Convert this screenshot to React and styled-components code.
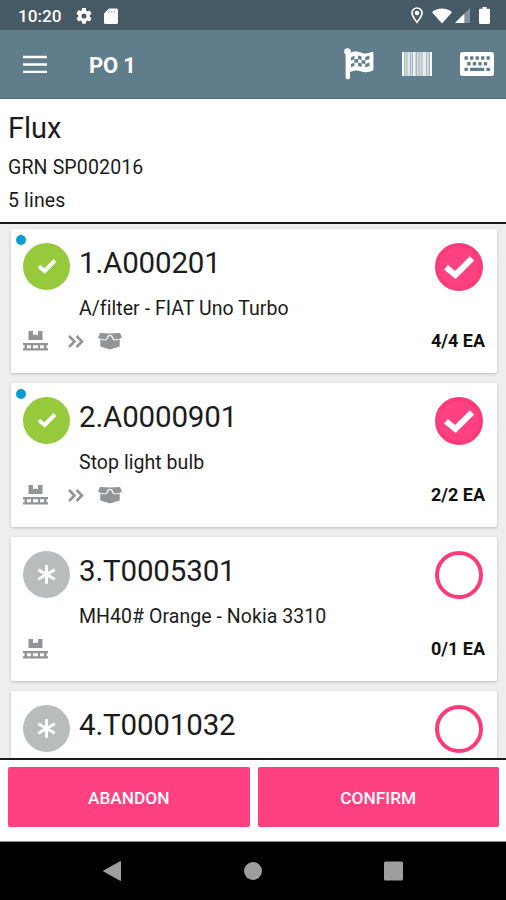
import React from 'react';
import styled, { createGlobalStyle } from 'styled-components';


const GlobalStyle = createGlobalStyle`
    body {
        margin: 0;
        font-family: Roboto, "Liberation Sans", sans-serif;
        color: #1c1c1c;
    }
    * {
        box-sizing: border-box;
    }
    svg {
        display: block;
        flex-shrink: 0;
    }
`

const Screen = styled.div`
    width: 506px;
    height: 900px;
    display: flex;
    flex-direction: column;
    overflow: hidden;
    background: #fff;
`

const StatusBar = styled.div`
    height: 30px;
    flex-shrink: 0;
    display: flex;
    align-items: center;
    padding: 1px 16px 0 18px;
    background: #455a64;
    color: #fff;
`

const Clock = styled.span`
    width: 58px;
    font-size: 17.2px;
    font-weight: 500;
    line-height: 24px;
`

const StatusIcons = styled.div`
    display: flex;
    align-items: center;
    gap: ${props => props.gap};
    margin-left: ${props => props.right ? 'auto' : '0'};
`

const Toolbar = styled.div`
    height: 69px;
    flex-shrink: 0;
    display: flex;
    align-items: center;
    padding: 0 12px 0 23px;
    background: #607d8b;
    color: #fff;
    border-bottom: 1px solid #536d79;
`

const Title = styled.span`
    margin-left: 42px;
    margin-top: 3px;
    font-size: 22px;
    font-weight: 700;
    line-height: 28px;
    letter-spacing: -0.2px;
`

const Actions = styled.div`
    margin-left: auto;
    display: flex;
    align-items: center;
    gap: 28px;
`

const Header = styled.div`
    height: 125px;
    flex-shrink: 0;
    padding: 12px 8px 0;
    border-bottom: 2px solid #1a1a1c;
`

const Supplier = styled.div`
    font-size: 29px;
    line-height: 34px;
    margin-bottom: 11px;
`

const HeaderLine = styled.div`
    font-size: 19.5px;
    line-height: 24px;
    letter-spacing: 0.15px;
    margin-bottom: 9px;
`

const List = styled.div`
    flex: 1;
    min-height: 0;
    overflow: hidden;
    display: flex;
    flex-direction: column;
    gap: 10px;
    padding: 5px 9px 0 11px;
    background: #eee;
`

const Card = styled.div`
    position: relative;
    height: 144px;
    flex-shrink: 0;
    padding: 14px 12px 0;
    background: #fff;
    border-radius: 2px;
    box-shadow: 0 1px 3px rgba(0, 0, 0, 0.22);
`

const UnsyncedDot = styled.div`
    position: absolute;
    left: 5px;
    top: 6px;
    width: 10px;
    height: 10px;
    border-radius: 50%;
    background: #0a9bd0;
`

const CardTop = styled.div`
    display: flex;
    align-items: flex-start;
`

const State = styled.div`
    width: 47px;
    height: 47px;
    display: flex;
    align-items: center;
    justify-content: center;
    border-radius: 50%;
    background: ${props => props.done ? '#97c93c' : '#b9bcbd'};
`

const Texts = styled.div`
    flex: 1;
    margin-left: 9px;
    padding-top: 3px;
    white-space: nowrap;
`

const Code = styled.div`
    font-size: 29.5px;
    line-height: 34px;
    letter-spacing: -0.15px;
`

const Description = styled.div`
    margin-top: 17px;
    font-size: 19.5px;
    line-height: 24px;
    letter-spacing: 0.05px;
`

const Check = styled.div`
    width: 48px;
    height: 48px;
    margin-right: 2px;
    display: flex;
    align-items: center;
    justify-content: center;
    border-radius: 50%;
    border: 4px solid #fd3b78;
    background: ${props => props.checked ? '#ff4081' : '#fff'};
`

const CardBottom = styled.div`
    display: flex;
    align-items: center;
    height: 22px;
    margin-top: 9px;
`

const Quantity = styled.span`
    margin-left: auto;
    color: #111;
    font-size: 18px;
    font-weight: 700;
    line-height: 22px;
`

const Route = styled.div`
    display: flex;
    align-items: center;
`

const ChevronSlot = styled.div`
    margin: 0 14px 0 20px;
`

const Footer = styled.div`
    height: 84px;
    flex-shrink: 0;
    display: flex;
    gap: 8px;
    padding: 7px 7px 15px 8px;
    border-top: 2px solid #1a1a1c;
    border-bottom: 1px solid #8a8a8a;
`

const Button = styled.button`
    flex: 1;
    height: 60px;
    padding: 1px 0 0;
    border: 0;
    border-radius: 2px;
    background: #ff4081;
    color: #fff;
    font-family: inherit;
    font-size: 17.3px;
    font-weight: 500;
`

const NavBar = styled.div`
    height: 58px;
    flex-shrink: 0;
    display: flex;
    align-items: center;
    justify-content: space-between;
    padding: 0 102px;
    background: #000;
`

const Gear = () =>
    <svg width="16" height="16" viewBox="2 2 20 20" fill="#fff">
        <path d="M19.14 12.94c.04-.3.06-.61.06-.94s-.02-.64-.07-.94l2.03-1.58c.18-.14.23-.41.12-.61l-1.92-3.32c-.12-.22-.37-.29-.59-.22l-2.39.96c-.5-.38-1.03-.7-1.62-.94l-.36-2.54A.48.48 0 0 0 13.92 2h-3.84c-.24 0-.43.17-.47.41l-.36 2.54c-.59.24-1.13.57-1.62.94l-2.39-.96c-.22-.08-.47 0-.59.22L2.74 8.87c-.12.21-.08.47.12.61l2.03 1.58c-.05.3-.09.63-.09.94s.02.64.07.94l-2.03 1.58c-.18.14-.23.41-.12.61l1.92 3.32c.12.22.37.29.59.22l2.39-.96c.5.38 1.03.7 1.62.94l.36 2.54c.05.24.24.41.48.41h3.84c.24 0 .44-.17.47-.41l.36-2.54c.59-.24 1.13-.56 1.62-.94l2.39.96c.22.08.47 0 .59-.22l1.92-3.32c.12-.22.07-.47-.12-.61zM12 15.2A3.2 3.2 0 1 1 12 8.800a3.2 3.2 0 0 1 0 6.400z" />
    </svg>

const SdCard = () =>
    <svg width="14" height="16" viewBox="0 0 14 16">
        <path d="M5 0.500h7.500a1.500 1.500 0 0 1 1.500 1.500v12.500a1.500 1.500 0 0 1-1.500 1.500h-11a1.500 1.500 0 0 1-1.500-1.500v-9z" fill="#fff" />
        <path d="M5 2.500v2.500M7.800 2.500v2.500M10.600 2.500v2.500" stroke="#b4bec3" strokeWidth="1.100" />
    </svg>

const Pin = () =>
    <svg width="12" height="17" viewBox="0 0 12 17" fill="none" stroke="#fff">
        <path d="M6 15.300C3.300 11.800 1 9 1 6a5 5 0 0 1 10 0c0 3-2.300 5.800-5 9.300z" strokeWidth="1.700" />
        <circle cx="6" cy="6" r="2.300" fill="#fff" stroke="none" />
    </svg>

const Wifi = () =>
    <svg width="20" height="16" viewBox="0 0 20 16">
        <path d="M0 4.200C2.900 1.800 6.300.5 10 .5s7.100 1.300 10 3.700L10 15.500z" fill="#fff" />
    </svg>

const Signal = () =>
    <svg width="15" height="15" viewBox="0 0 15 15">
        <path d="M0 15L15 0v15z" fill="#83929a" />
        <path d="M0 15L9.300 5.700V15z" fill="#fff" />
    </svg>

const Battery = () =>
    <svg width="11" height="17" viewBox="0 0 11 17">
        <path d="M3.500 0h4v1.700h2.300c.7 0 1.200.5 1.200 1.200v12.900c0 .7-.5 1.200-1.200 1.200H1.200C.5 17 0 16.500 0 15.800V2.900c0-.7.5-1.200 1.200-1.200h2.300z" fill="#fff" />
    </svg>

const Burger = () =>
    <svg width="24" height="18" viewBox="0 0 24 18">
        <path d="M0 2h24M0 9.500h24M0 17h24" stroke="#fff" strokeWidth="2.600" />
    </svg>

const Flag = () =>
    <svg width="30" height="32" viewBox="0 0 30 32">
        <circle cx="3.500" cy="3.600" r="3.300" fill="#fff" />
        <rect x="1.600" y="3" width="4.400" height="28.300" rx="1.800" fill="#fff" />
        <path d="M6 5c5-2.200 8-1.500 12 0 3.500 1.200 6.500.3 9.500-.9 1.100-.4 1.900.2 1.900 1.200v15.500c0 1-.4 1.600-1.300 2-4.500 2-8 1.600-11.600.4-3.500-1.200-6.500-.8-10.500.9z" fill="#fff" />
        <path
            d="M7 9.200l3.400-1.400v3.400l-3.400 1.300zM14.100 7.600l3.500.8v3.700l-3.500-1zM10.400 11.200l3.700-.1v3.500l-3.700.1zM17.600 12.100l3.700.3v3.500l-3.700-.4zM21.300 8.900l4.200-1.300v3.400l-4.200 1.400zM7 16l3.400-1.300v3.300l-3.400 1.300zM14.100 14.600l3.500.9v3.600l-3.500-1zM21.300 15.900l4.200-1.300v3.300l-4.200 1.500z"
            fill="#607d8b"
        />
    </svg>

const bars = [
    [0, 2, 1], [3, 1.500, 0.500], [5.500, 2.500, 0.650], [9, 1, 0.500], [11, 2.500, 0.800], [15, 1.500, 0.600],
    [17.500, 2, 0.500], [20.500, 3.500, 0.750], [25, 1.500, 0.600], [28, 2, 0.900],
];

const Barcode = () =>
    <svg width="30" height="24" viewBox="0 0 30 24">
        <rect width="30" height="24" fill="#fff" opacity="0.450" />
        {bars.map(([x, width, opacity]) =>
            <rect key={x} x={x} width={width} height="24" fill="#fff" opacity={opacity} />
        )}
    </svg>

const keys = [
    [4.500, 4.300], [10, 4.300], [15.500, 4.300], [21, 4.300], [26.500, 4.300],
    [7.200, 10], [12.800, 10], [18.300, 10], [23.800, 10],
    [4.500, 15.700], [26.500, 15.700],
];

const Keyboard = () =>
    <svg width="34" height="24" viewBox="0 0 34 24">
        <rect width="34" height="24" rx="2.500" fill="#fff" />
        {keys.map(([x, y]) =>
            <rect key={`${x}-${y}`} x={x} y={y} width="3.400" height="3.400" rx="0.500" fill="#607d8b" />
        )}
        <rect x="10" y="15.700" width="14.200" height="3.400" rx="0.500" fill="#607d8b" />
    </svg>

const Tick = ({ width, height, strokeWidth }) =>
    <svg width={width} height={height} viewBox={`0 0 ${width} ${height}`} fill="none" stroke="#fff" strokeWidth={strokeWidth}>
        <path d={`M2 ${height * 0.49}L${width * 0.38} ${height - 4}L${width - 2} 2.500`} />
    </svg>

const Asterisk = () =>
    <svg width="20" height="20" viewBox="0 0 20 20" stroke="#fff" strokeWidth="3">
        <path d="M9.500 .2v18.600M1.200 4.800l16.600 9.400M1.200 14.200l16.600-9.400" />
    </svg>

const Chevrons = () =>
    <svg width="16" height="13" viewBox="0 0 16 13" fill="none" stroke="#929496" strokeWidth="2.600">
        <path d="M1 1l5.500 5.500L1 12M8.500 1l5.500 5.500L8.500 12" />
    </svg>

const Pallet = () =>
    <svg width="25" height="20" viewBox="0 0 25 20" fill="#929496">
        <path d="M5.500 0H10v4.200l2.500-.8 2.500.8V0h4.500v9h-14z" />
        <path d="M0 12h25v2.300h-1.500v3H25v2.300H0v-2.300h1.500v-3H0zM4 14.300v3h4v-3zM10 14.300v3h5v-3zM17 14.300v3h4v-3z" fillRule="evenodd" />
    </svg>

const OpenBox = () =>
    <svg width="24" height="18" viewBox="0 0 24 18">
        <path d="M2 1l10 .6L22 1l2 4.500-2.300 1.300v7.700L12 17.500l-9.700-3V6.800L0 5.500z" fill="#929496" />
        <path d="M2.500 7.400L8.200 8 12 2.800 15.800 8l5.700-.6M8.200 8l2.300-5M15.800 8l-2.300-5" fill="none" stroke="#fff" strokeWidth="0.900" />
    </svg>

const lines = [
    { code: '1.A000201', description: 'A/filter - FIAT Uno Turbo', quantity: '4/4 EA', done: true },
    { code: '2.A0000901', description: 'Stop light bulb', quantity: '2/2 EA', done: true },
    { code: '3.T0005301', description: 'MH40# Orange - Nokia 3310', quantity: '0/1 EA', done: false },
    { code: '4.T0001032', done: false },
];

//One line of the purchase order, with its receiving state.
const OrderLine = ({ code, description, quantity, done }) =>
    <Card>
        {done && <UnsyncedDot />}
        <CardTop>
            <State done={done}>
                {done ? <Tick width={20} height={17} strokeWidth={4} /> : <Asterisk />}
            </State>
            <Texts>
                <Code>{code}</Code>
                {description && <Description>{description}</Description>}
            </Texts>
            <Check checked={done}>
                {done && <Tick width={30} height={23} strokeWidth={6} />}
            </Check>
        </CardTop>
        {quantity &&
            <CardBottom>
                <Route>
                    <Pallet />
                    {done && <ChevronSlot><Chevrons /></ChevronSlot>}
                    {done && <OpenBox />}
                </Route>
                <Quantity>{quantity}</Quantity>
            </CardBottom>
        }
    </Card>

const App = () =>
    <Screen>
        <GlobalStyle />
        <StatusBar>
            <Clock>10:20</Clock>
            <StatusIcons gap="12px">
                <Gear />
                <SdCard />
            </StatusIcons>
            <StatusIcons gap="9px" right>
                <Pin />
                <StatusIcons gap="3px">
                    <Wifi />
                    <Signal />
                </StatusIcons>
                <Battery />
            </StatusIcons>
        </StatusBar>
        <Toolbar>
            <Burger />
            <Title>PO 1</Title>
            <Actions>
                <Flag />
                <Barcode />
                <Keyboard />
            </Actions>
        </Toolbar>
        <Header>
            <Supplier>Flux</Supplier>
            <HeaderLine>GRN SP002016</HeaderLine>
            <HeaderLine>5 lines</HeaderLine>
        </Header>
        <List>
            {lines.map(line => <OrderLine key={line.code} {...line} />)}
        </List>
        <Footer>
            <Button>ABANDON</Button>
            <Button>CONFIRM</Button>
        </Footer>
        <NavBar>
            <svg width="20" height="20" viewBox="0 0 20 20">
                <path d="M1.500 10L18.500 .5v19z" fill="#9e9e9e" stroke="#9e9e9e" strokeLinejoin="round" />
            </svg>
            <svg width="18" height="18" viewBox="0 0 18 18">
                <circle cx="9" cy="9" r="9" fill="#9e9e9e" />
            </svg>
            <svg width="20" height="20" viewBox="0 0 20 20">
                <rect width="19" height="19" y="0.500" rx="1.500" fill="#9e9e9e" />
            </svg>
        </NavBar>
    </Screen>


export default App;
